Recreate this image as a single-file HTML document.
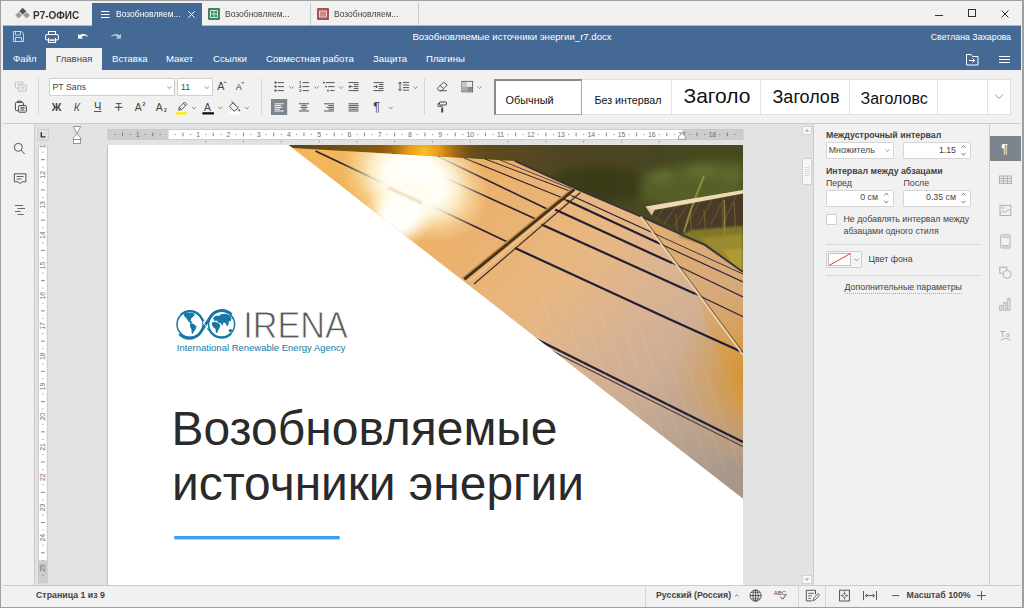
<!DOCTYPE html>
<html><head><meta charset="utf-8">
<style>
*{box-sizing:border-box;margin:0;padding:0}
html,body{width:1024px;height:608px;overflow:hidden;background:#f1f1f1;font-family:"Liberation Sans","DejaVu Sans",sans-serif;font-size:11px;color:#444}
.abs{position:absolute}
#win{position:absolute;left:0;top:0;width:1024px;height:608px;background:#f1f1f1;border:1px solid #9f9f9f;border-right-width:2px;border-bottom-width:1px}
#hdr{position:absolute;left:3px;top:26px;width:1018px;height:44px;background:#446995}
#tab1{position:absolute;left:92px;top:3px;width:110px;height:23px;background:#446995;color:#fff}
.ttab{position:absolute;top:3px;height:23px;border-right:1px solid #cbcbcb;color:#444}
.ttxt{position:absolute;top:5px;font-size:9.6px;line-height:12px;white-space:nowrap;transform:scaleX(.885);transform-origin:0 0}
.menu{position:absolute;top:48px;height:22px;line-height:22px;font-size:9.6px;color:#fff;white-space:nowrap}
#toolbar{position:absolute;left:3px;top:70px;width:1018px;height:54px;background:#f1f1f1;border-bottom:1px solid #cbcbcb}
#left{position:absolute;left:3px;top:124px;width:32px;height:461px;background:#f1f1f1;border-right:1px solid #cbcbcb}
#doc{position:absolute;left:35px;top:124px;width:778px;height:461px;background:#e2e2e2;overflow:hidden}
#page{position:absolute;left:73px;top:21px;width:635px;height:445px;background:#fff}
#rpanel{position:absolute;left:813px;top:124px;width:177px;height:461px;background:#f1f1f1;border-left:1px solid #cbcbcb;border-right:1px solid #cbcbcb}
#ricons{position:absolute;left:990px;top:124px;width:31px;height:461px;background:#f1f1f1}
#status{position:absolute;left:3px;top:585px;width:1018px;height:22px;background:#f1f1f1;border-top:1px solid #cbcbcb}
.gl{top:80px;width:1px;height:34px;background:#e3e3e3}
.gt{color:#111;line-height:14px;white-space:nowrap}
.pl{font-size:8.8px;line-height:12px;color:#444;white-space:nowrap}
.b{font-weight:bold}
.r{text-align:right}
.inp{background:#fff;border:1px solid #d6d6d6;border-radius:1px}
.vs{top:586px;width:1px;height:21px;background:#d4d4d4}
</style></head><body>
<div id="win"></div>
<!-- title tabs -->

<!-- title row -->
<svg class="abs" style="left:14.5px;top:8px" width="16" height="12" viewBox="0 0 16 12">
 <rect x="5.2" y="0.8" width="5" height="5" transform="rotate(45 7.7 3.3)" fill="#555"/>
 <rect x="1.3" y="5" width="4.6" height="4.6" transform="rotate(45 3.6 7.3)" fill="#999"/>
 <rect x="9.3" y="5" width="4.6" height="4.6" transform="rotate(45 11.6 7.3)" fill="#999"/>
</svg>
<div class="abs" style="left:33px;top:7.6px;font-size:11.3px;font-weight:bold;color:#333;white-space:nowrap;line-height:14px;transform:scaleX(.885);transform-origin:0 0">Р7-ОФИС</div>
<div id="tab1">
 <svg class="abs" style="left:9px;top:8px" width="9" height="7" viewBox="0 0 9 7"><path d="M0 .5h8.5M0 3.5h8.5M0 6.5h8.5" stroke="#fff" stroke-width="1"/></svg>
 <span class="ttxt" style="left:24px;color:#fff">Возобновляем...</span>
 <svg class="abs" style="left:96px;top:8px" width="7" height="7" viewBox="0 0 7 7"><path d="M.3 .3L6.7 6.7M6.7 .3L.3 6.7" stroke="#fff" stroke-width="1"/></svg>
</div>
<div class="ttab" style="left:202px;width:109px">
 <svg class="abs" style="left:6px;top:5px" width="12" height="12" viewBox="0 0 12 12"><rect x="0" y="0" width="12" height="12" rx="1" fill="#40865c"/><path d="M2.5 2.5h7v7h-7zM2.5 6h7M6 2.5v7" stroke="#cfe3d6" stroke-width="1" fill="none"/></svg>
 <span class="ttxt" style="left:23px">Возобновляем...</span>
</div>
<div class="ttab" style="left:311px;width:108px">
 <svg class="abs" style="left:6px;top:5px" width="12" height="12" viewBox="0 0 12 12"><rect x="0" y="0" width="12" height="12" rx="1" fill="#aa5252"/><rect x="2.5" y="3" width="7" height="6" fill="#c98a8a" stroke="#e8cdcd" stroke-width="1"/></svg>
 <span class="ttxt" style="left:23px">Возобновляем...</span>
</div>
<!-- window controls -->
<svg class="abs" style="left:930px;top:6px" width="90" height="16" viewBox="0 0 90 16">
 <path d="M5 9.5h8" stroke="#333" stroke-width="1"/>
 <rect x="38.5" y="3.5" width="7" height="7" fill="none" stroke="#333" stroke-width="1"/>
 <path d="M71.5 4.5l7 7M78.5 4.5l-7 7" stroke="#333" stroke-width="1"/>
</svg>

<div class="abs" style="left:3px;top:25px;width:89px;height:1px;background:#acbbcc"></div><div class="abs" style="left:202px;top:25px;width:819px;height:1px;background:#acbbcc"></div>
<div id="hdr">
 <!-- quick icons: coordinates relative to hdr (left 3, top 26) -->
 <svg class="abs" style="left:9px;top:4px" width="120" height="14" viewBox="0 0 120 14">
  <g fill="none" stroke="#c5d2e0" stroke-width="1">
   <path d="M1.5 1.5h8l2 2v8h-10z"/><path d="M3.5 1.5v3.5h5v-3.5M3.5 11.5v-4h6v4"/>
  </g>
  <g fill="none" stroke="#fff" stroke-width="1.1">
   <path d="M36.5 4.5v-3h7v3"/><rect x="33.6" y="4.5" width="12.8" height="5.5" rx="1.5"/><path d="M36.5 8v4.5h7v-4.5M38 10.3h4"/>
  </g>
  <path d="M66 8.5l0-4.8 1.6 1.6c3-2.2 6.8-1.6 9.2 2.2-2.6-2.2-5.2-2.6-7.4-.4l1.6 1.6z" fill="#fff"/>
  <path d="M109 8.5l0-4.8-1.6 1.6c-3-2.2-6.800-1.600-9.200 2.200 2.600-2.200 5.200-2.600 7.400-.4l-1.600 1.600z" fill="#b9c6d8"/>
 </svg>
 <div class="abs" style="left:0;top:5px;width:1018px;text-align:center;color:#fff;font-size:9.6px;line-height:12px;white-space:nowrap">Возобновляемые источники энергии_r7.docx</div>
 <div class="abs" style="right:10px;top:5px;color:#fff;font-size:8.8px;line-height:12px;white-space:nowrap">Светлана Захарова</div>
 <div class="abs" style="left:43px;top:22px;width:56px;height:22px;background:#f1f1f1"></div>
 <span class="menu" style="left:10px;top:22px">Файл</span>
 <span class="menu" style="left:53px;top:22px;color:#444">Главная</span>
 <span class="menu" style="left:109px;top:22px">Вставка</span>
 <span class="menu" style="left:163px;top:22px">Макет</span>
 <span class="menu" style="left:210px;top:22px">Ссылки</span>
 <span class="menu" style="left:263px;top:22px">Совместная работа</span>
 <span class="menu" style="left:370px;top:22px">Защита</span>
 <span class="menu" style="left:423px;top:22px">Плагины</span>
 <svg class="abs" style="left:962px;top:27px" width="50" height="14" viewBox="0 0 50 14">
  <g fill="none" stroke="#fff" stroke-width="1"><path d="M1.500 1.500h4.500l1.500 2h5.500v8.500h-11.500z"/><path d="M4 7.500h5.500M7.500 5.500l2 2-2 2"/></g>
  <path d="M34 3.500h11M34 6.500h11M34 9.500h11" stroke="#fff" stroke-width="1"/>
 </svg>
</div>


<div id="toolbar"></div>
<!-- combos -->
<div class="abs" style="left:49px;top:78px;width:126px;height:18px;background:#fff;border:1px solid #cfcfcf;border-radius:1px"></div>
<div class="abs" style="left:52.4px;top:81px;font-size:8.8px;line-height:12px;color:#444">PT Sans</div>
<div class="abs" style="left:177px;top:78px;width:36px;height:18px;background:#fff;border:1px solid #cfcfcf;border-radius:1px"></div>
<div class="abs" style="left:181px;top:81px;font-size:8.8px;line-height:12px;color:#444">11</div>
<svg class="abs" style="left:0;top:70px" width="1024" height="54" viewBox="0 70 1024 54" font-family="Liberation Sans, sans-serif">
<g stroke="#d4d4d4" stroke-width="1"><path d="M38.500 78.500v36M261.500 78.500v36M424.500 78.500v36"/></g>
<!-- copy (disabled) -->
<g fill="#f1f1f1" stroke="#c2c2c2" stroke-width="0.900"><rect x="15.400" y="81.900" width="7.600" height="6.200" rx="0.500"/><path d="M17 84h4.400" /><rect x="18.500" y="85.100" width="7.800" height="6.200" rx="0.500"/><path d="M20.300 87.300h4.200M20.300 89.200h4.200"/></g>
<!-- paste -->
<g fill="#f1f1f1" stroke="#444" stroke-width="1"><path d="M17.400 102.500v-1.300h4v1.300" fill="none"/><rect x="15.400" y="102.400" width="8" height="8.200" rx="0.900"/><rect x="18.600" y="105.600" width="7.700" height="6.600" rx="0.700"/><path d="M20.400 107.900h4.100M20.400 110h4.100" stroke-width="1.200"/></g>
<path d="M167.4 86.4l2 2.2 2-2.200" fill="none" stroke="#777" stroke-width="0.8"/><path d="M205 86.4l2 2.2 2-2.200" fill="none" stroke="#777" stroke-width="0.8"/><path d="M192 106.8l2 2.2 2-2.200" fill="none" stroke="#777" stroke-width="0.8"/><path d="M218.3 106.8l2 2.2 2-2.200" fill="none" stroke="#777" stroke-width="0.8"/><path d="M245 106.8l2 2.2 2-2.200" fill="none" stroke="#777" stroke-width="0.8"/><path d="M289.5 86.4l2 2.2 2-2.200" fill="none" stroke="#777" stroke-width="0.8"/><path d="M314.5 86.4l2 2.2 2-2.200" fill="none" stroke="#777" stroke-width="0.8"/><path d="M339 86.4l2 2.2 2-2.200" fill="none" stroke="#777" stroke-width="0.8"/><path d="M413.4 86.4l2 2.2 2-2.200" fill="none" stroke="#777" stroke-width="0.8"/><path d="M477.6 86.4l2 2.2 2-2.200" fill="none" stroke="#777" stroke-width="0.8"/><path d="M388.8 106.8l2 2.2 2-2.200" fill="none" stroke="#777" stroke-width="0.8"/>
<!-- A inc / dec -->
<text x="217.300" y="90.200" font-size="10.800" fill="#444">A</text><path d="M223.800 83.200l1.300-1.400 1.300 1.400" fill="none" stroke="#444" stroke-width="0.800"/>
<text x="235.800" y="90.200" font-size="9" fill="#444">A</text><path d="M241.400 82l1.300 1.400 1.300-1.400" fill="none" stroke="#444" stroke-width="0.800"/>
<!-- row2 text icons -->
<text x="51.800" y="110.700" font-size="10.600" font-weight="bold" fill="#444">Ж</text>
<text x="73.800" y="110.700" font-size="10.600" font-style="italic" fill="#555">К</text>
<text x="94" y="109.600" font-size="11.200" fill="#444" textLength="7.400" lengthAdjust="spacingAndGlyphs">Ч</text><path d="M94 111.500h7.400" stroke="#444" stroke-width="0.900"/>
<text x="115.400" y="110.700" font-size="10.200" fill="#444">Т</text><path d="M114.800 107.300h7.600" stroke="#444" stroke-width="1"/>
<text x="134.800" y="111" font-size="10.400" fill="#444">A</text><text x="142.500" y="105.700" font-size="5" font-weight="bold" fill="#444">2</text>
<text x="155.800" y="111" font-size="10.400" fill="#444">A</text><text x="164" y="111.600" font-size="4.800" font-weight="bold" fill="#444">2</text>
<!-- highlighter pen -->
<g fill="none" stroke="#444" stroke-width="0.900"><path d="M179.300 107.300l5.200-5.200 2.300 2.300-5.200 5.200-2.900.6z"/><path d="M183.300 103.300l2.300 2.300"/><path d="M179.300 107.300l2.300 2.300"/></g>
<rect x="176" y="112.200" width="11" height="2.300" fill="#ffef00"/>
<!-- font color -->
<text x="204" y="110.700" font-size="10.400" fill="#444">A</text>
<rect x="202.400" y="112.200" width="11.500" height="2.300" fill="#111"/>
<!-- bucket -->
<g fill="none" stroke="#444" stroke-width="0.900"><path d="M232.800 102.800l5.600 5.200-4.200 3.200-4.800-4.600z"/><path d="M231.500 101.300l4 3.800"/></g><circle cx="239.300" cy="110.300" r="0.900" fill="#444"/>
<rect x="229" y="112.200" width="11.200" height="2.300" fill="#fff"/>
<!-- bullets -->
<g fill="#444"><circle cx="275.500" cy="82.600" r="1.150"/><circle cx="275.500" cy="86.600" r="1.150"/><circle cx="275.500" cy="90.600" r="1.150"/></g>
<path d="M277.600 82.600h6.400M277.600 86.600h6.400M277.600 90.600h6.400" stroke="#444" stroke-width="0.900"/>
<!-- numbered -->
<g font-size="4.200" font-weight="bold" fill="#444"><text x="298.900" y="84.300">1</text><text x="298.900" y="88.200">2</text><text x="298.900" y="92.100">3</text></g>
<path d="M302.600 82.600h6.400M302.600 86.600h6.400M302.600 90.600h6.400" stroke="#444" stroke-width="0.900"/>
<!-- multilevel -->
<g fill="#444"><circle cx="323.900" cy="82.600" r="0.900"/><circle cx="326.100" cy="86.600" r="0.900"/><circle cx="328" cy="90.600" r="0.900"/></g>
<path d="M325.800 82.600h8.700M328.200 86.600h6.300M330.300 90.600h4.200" stroke="#444" stroke-width="0.900"/>
<!-- dec indent -->
<g stroke="#444" stroke-width="0.900" fill="none"><path d="M348.500 82.600h10M348.500 90.600h10M353.800 84.600h4.700M353.800 86.600h4.700M353.800 88.600h4.700M349 86.600h3.800M350.600 85l-1.600 1.600 1.600 1.600"/></g>
<!-- inc indent -->
<g stroke="#444" stroke-width="0.900" fill="none"><path d="M373.500 82.600h10M373.500 90.600h10M378.800 84.600h4.700M378.800 86.600h4.700M378.800 88.600h4.700M373.600 86.600h3.800M375.800 85l1.600 1.600-1.600 1.600"/></g>
<!-- line spacing -->
<g stroke="#444" stroke-width="0.900" fill="none"><path d="M400 82v8.600M398.300 83.700l1.700-1.700 1.700 1.700M398.300 88.900l1.700 1.700 1.700-1.700M403 82.400h6M403 85h6M403 87.600h6M403 90.200h6"/></g>
<!-- eraser -->
<g stroke="#444" stroke-width="0.900" fill="none" stroke-linejoin="round"><path d="M437.300 88.300l6.200-6 3.800 2.600-5.600 5.800h-2.900z"/><path d="M440 85.500l3.600 3M440 90.700h6.800"/></g>
<!-- color scheme -->
<rect x="461.900" y="81.400" width="10.700" height="10.400" fill="#fff" stroke="#555" stroke-width="0.900"/><rect x="462.400" y="81.900" width="4.800" height="4.700" fill="#c6c6c6"/><rect x="462.400" y="86.600" width="4.800" height="4.700" fill="#a9a9a9"/><rect x="467.200" y="86.600" width="4.900" height="4.700" fill="#8b8b8b"/><rect x="467.200" y="81.900" width="4.900" height="4.700" fill="#ececec"/>
<!-- align left active -->
<rect x="271" y="99" width="16.200" height="16" fill="#7d858c"/>
<path d="M274.500 103.800h9.300M274.500 105.600h6.500M274.500 107.400h8M274.500 109.200h5.500M274.500 111h9.300" stroke="#fff" stroke-width="0.900"/>
<!-- center -->
<path d="M299 103.800h10M301.500 105.600h5M300.300 107.400h7.400M301.500 109.200h5M299 111h10" stroke="#444" stroke-width="0.900"/>
<!-- right -->
<path d="M324 103.800h10M328.500 105.600h5.500M326.500 107.400h7.500M328.500 109.200h5.500M324 111h10" stroke="#444" stroke-width="0.900"/>
<!-- justify -->
<path d="M348.500 103.800h10M348.500 105.600h10M348.500 107.400h10M348.500 109.200h10M348.500 111h10" stroke="#444" stroke-width="0.900"/>
<!-- pilcrow -->
<text x="373.300" y="110.600" font-size="12.600" fill="#444">¶</text>
<!-- paint roller -->
<g stroke="#444" fill="none"><rect x="439.500" y="102" width="7" height="3" rx="0.600" stroke-width="1"/><path d="M439.500 103.500h-1.500v2.800h4.200v1.700" stroke-width="0.900"/><path d="M442.200 108v4.500" stroke-width="2"/></g>
</svg>
<!-- styles gallery -->
<div class="abs" style="left:494px;top:79px;width:517px;height:36px;background:#fff;border:1px solid #e0e0e0"></div>
<div class="abs" style="left:494px;top:79px;width:88px;height:36px;border:2px solid #8a8a8a;border-right-width:1px;border-bottom-width:1px;border-right-color:#aaa;border-bottom-color:#aaa"></div>
<div class="abs gl" style="left:671px"></div><div class="abs gl" style="left:760px"></div><div class="abs gl" style="left:849px"></div><div class="abs gl" style="left:937px"></div><div class="abs gl" style="left:987px"></div>
<div class="abs gt" style="left:505.500px;top:93px;font-size:10.900px">Обычный</div>
<div class="abs gt" style="left:594.500px;top:93px;font-size:10.700px;width:67.500px;overflow:hidden">Без интервал</div>
<div class="abs gt" style="left:683.500px;top:84px;font-size:21px;width:67.500px;overflow:hidden;line-height:24px">Заголо</div>
<div class="abs gt" style="left:772.500px;top:87px;font-size:18px;width:67px;overflow:hidden;line-height:21px">Заголов</div>
<div class="abs gt" style="left:860.500px;top:89px;font-size:16px;width:67.500px;overflow:hidden;line-height:19px">Заголовс</div>
<svg class="abs" style="left:994px;top:93px" width="10" height="7" viewBox="0 0 10 7"><path d="M1 1.500l4 4 4-4" fill="none" stroke="#999" stroke-width="1"/></svg>


<div id="left"></div>
<svg class="abs" style="left:3px;top:124px" width="32" height="120" viewBox="3 124 32 120">
 <g fill="none" stroke="#555" stroke-width="1">
  <circle cx="18.300" cy="147.300" r="4"/><path d="M21.200 150.300l3.500 3.800"/>
  <path d="M14.300 173.800h11.600v8h-4l-1.800 2-1.800-2h-4z"/><path d="M16.600 176.500h7M16.600 179h5" stroke-width="0.900"/>
  <path d="M15 205.500h8M17.500 208.500h7.500M15 211.500h5.500M17.500 214.500h6" stroke-width="0.900"/>
 </g>
</svg>

<div id="doc"></div>
<!--DOC-START-->
<div class="abs" style="left:107px;top:145px;width:636px;height:440px;background:#fff;border-left:1px solid #bbbfc4"></div>
<svg class="abs" style="left:108px;top:145px" width="635" height="440" viewBox="108 145 635 440" font-family="Liberation Sans, sans-serif">
<defs>
<clipPath id="bgc"><path d="M288 145H743V272L704.800 244.900 640.700 216.500 574 188 514.800 161 293 148z"/></clipPath>
<clipPath id="pc"><path d="M280 147.300L293 148 514.800 161 574 188 640.700 216.500 704.800 244.900 743 272V500H280z"/></clipPath>
<clipPath id="tri"><path d="M288.5 145H743V498.5z"/></clipPath>
<linearGradient id="pg" gradientUnits="userSpaceOnUse" x1="330" y1="150" x2="743" y2="470">
 <stop offset="0" stop-color="#f3b65a"/><stop offset="0.25" stop-color="#ecb068"/><stop offset="0.5" stop-color="#e7b782"/><stop offset="0.75" stop-color="#d9b394"/><stop offset="1" stop-color="#b59a84"/>
</linearGradient>
<linearGradient id="bg" gradientUnits="userSpaceOnUse" x1="300" y1="150" x2="743" y2="175">
 <stop offset="0" stop-color="#5e4514"/><stop offset="0.27" stop-color="#9a6410"/><stop offset="0.42" stop-color="#5c4a1c"/><stop offset="0.6" stop-color="#4f4524"/><stop offset="0.8" stop-color="#484622"/><stop offset="1" stop-color="#464a1e"/>
</linearGradient>
<radialGradient id="sun" gradientUnits="userSpaceOnUse" cx="0" cy="0" r="68">
 <stop offset="0" stop-color="#fff"/><stop offset="0.4" stop-color="#fffef6"/><stop offset="0.58" stop-color="#fffae0" stop-opacity="0.82"/><stop offset="0.8" stop-color="#fff3c4" stop-opacity="0.35"/><stop offset="1" stop-color="#ffefb8" stop-opacity="0"/>
</radialGradient>
<radialGradient id="sun2" gradientUnits="userSpaceOnUse" cx="0" cy="0" r="40">
 <stop offset="0" stop-color="#fff"/><stop offset="0.42" stop-color="#fffef8"/><stop offset="0.6" stop-color="#fffdf0" stop-opacity="0.75"/><stop offset="0.8" stop-color="#fffae0" stop-opacity="0.3"/><stop offset="1" stop-color="#fffae0" stop-opacity="0"/>
</radialGradient>
<filter id="bl" x="-20%" y="-20%" width="140%" height="140%"><feGaussianBlur stdDeviation="4"/></filter>
<filter id="bl2" x="-20%" y="-20%" width="140%" height="140%"><feGaussianBlur stdDeviation="1.2"/></filter>
<radialGradient id="sun3" gradientUnits="userSpaceOnUse" cx="424" cy="153" r="46">
 <stop offset="0" stop-color="#ffc02a"/><stop offset="0.35" stop-color="#f0a018" stop-opacity="0.9"/><stop offset="0.7" stop-color="#c07c10" stop-opacity="0.5"/><stop offset="1" stop-color="#a8690f" stop-opacity="0"/>
</radialGradient>
<linearGradient id="sec3" gradientUnits="userSpaceOnUse" x1="642" y1="218" x2="743" y2="420">
 <stop offset="0" stop-color="#e0a65c"/><stop offset="0.5" stop-color="#dba462"/><stop offset="1" stop-color="#d99a44"/>
</linearGradient>
<linearGradient id="desat" gradientUnits="userSpaceOnUse" x1="560" y1="290" x2="700" y2="500">
 <stop offset="0" stop-color="#d2b29a" stop-opacity="0"/><stop offset="0.35" stop-color="#ceae96" stop-opacity="0.55"/><stop offset="0.7" stop-color="#bca490" stop-opacity="0.85"/><stop offset="1" stop-color="#a8968a" stop-opacity="1"/>
</linearGradient>
<radialGradient id="gold" gradientUnits="userSpaceOnUse" cx="765" cy="375" r="95">
 <stop offset="0" stop-color="#d08a22"/><stop offset="0.4" stop-color="#d8993c" stop-opacity="0.75"/><stop offset="1" stop-color="#dba462" stop-opacity="0"/>
</radialGradient>
</defs>
<g clip-path="url(#tri)">
 <rect x="288" y="145" width="456" height="354" fill="url(#pg)"/>
 <rect x="288" y="145" width="456" height="354" fill="url(#desat)"/>
 <!-- third section (right of rail 2) slightly more orange -->
 <path d="M640.700 216.500L704.800 244.900 743 272V420L695 290z" fill="url(#sec3)" opacity="0.550"/>
 <circle cx="765" cy="375" r="95" fill="url(#gold)"/>
 <!-- background hills -->
 <path d="M288 145H743V272L704.800 244.900 640.700 216.500 574 188 514.800 161 293 148z" fill="url(#bg)"/>
 <circle cx="424" cy="153" r="46" fill="url(#sun3)" clip-path="url(#bgc)"/>
 <!-- bushes -->
 <g clip-path="url(#bgc)">
 <g filter="url(#bl)">
 <ellipse cx="600" cy="184" rx="50" ry="18" fill="#383c16" opacity="0.900"/>
 <path d="M640 178c10-8 22-8 34-11s26-7 40-6l29 2v34l-60 12-40-8z" fill="#566228" opacity="0.900"/>
 <ellipse cx="662" cy="176" rx="12" ry="5" fill="#6f7a38" opacity="0.700"/><ellipse cx="702" cy="172" rx="16" ry="5" fill="#6c7836" opacity="0.700"/><ellipse cx="732" cy="176" rx="12" ry="6" fill="#667232" opacity="0.700"/>
 </g>
 </g>
 <!-- right array -->
 <path d="M650 212l93-18v44l-62-6z" fill="#4a3a28"/>
 <g stroke="#7a6850" stroke-width="0.800" opacity="0.750" fill="none"><path d="M664 208l-8 12M676 206l-12 18M688 204l-14 22M700 202l-14 24M712 200l-14 26M724 198l-14 28M736 196l-14 30"/></g>
 <g filter="url(#bl2)"><path d="M678 236l14-6 51-4v46l-38-27z" fill="#82782a"/>
 <path d="M700 238l43-4v38l-30-22z" fill="#9a8a2e"/><path d="M724 250l19-2v24l-12-9z" fill="#b09a34"/></g>
 <path d="M676 214l1 16M690 214l2 20M704 210l2 26M722 204l2 34M734 202l2 30" stroke="#75702e" stroke-width="1.200" fill="none" opacity="0.700"/>
 <path d="M704 176c-5 12-14 34-20 56" stroke="#8f9440" stroke-width="2" fill="none" opacity="0.900"/><path d="M724 200c1 10 1 24 0 46" stroke="#8c9040" stroke-width="1.600" fill="none" opacity="0.800"/>
 <path d="M645.600 206.600L743 190v3.400l-94 17.600z" fill="#f0d8b4"/>
 <path d="M645.600 206.600l6 9 3-5z" fill="#dcc09a"/>
 <!-- panel top edge dark -->
 <path d="M514.800 161L574 188 640.700 216.500 704.800 244.900 743 272" fill="none" stroke="#3a3040" stroke-width="1.800"/>
 <!-- panel lines left section -->
 <g stroke="#2b2233" stroke-width="1.600" fill="none">
  <path d="M315.500 151L508.600 242.500"/>
  <path d="M393 154L536.700 219.500"/>
  <path d="M438 156.500L548.700 209.700"/>
  <path d="M464 158L562.900 198.100" stroke-width="1.100"/>
  <path d="M485 159L571 191.500" stroke-width="1"/>
  <path d="M500 160L573 189.500" stroke-width="0.800"/>
 </g>
 <!-- right section lines -->
 <g stroke="#221e34" stroke-width="2.200" fill="none">
  <path d="M563.700 199L660 243.700"/>
  <path d="M555 209.600L672 263"/>
  <path d="M541.500 224.400L695.500 294"/>
  <path d="M515 248L669 319 743 352.500"/>
  <path d="M568 194L651 232" stroke-width="1.200"/>
 </g>
 <g stroke="#2e2840" stroke-width="1.200" fill="none">
  <path d="M660 243.700L743 282"/><path d="M672 263L743 297"/><path d="M695.500 294L743 316.700"/>
  <path d="M651 232L743 274" stroke-width="0.900"/>
 </g>
 <!-- lower double line -->
 <path d="M530 336L743 442" stroke="#221e34" stroke-width="2.200" fill="none"/>
 <path d="M538 344L743 446.500" stroke="#3a3448" stroke-width="1.100" fill="none"/>
 <!-- rail 1 -->
 <path d="M574 189L464 279" stroke="#4a3218" stroke-width="4" fill="none"/>
 <path d="M573 187.800L462.500 278" stroke="#c8964e" stroke-width="1.400" fill="none"/>
 <path d="M577 190.500L470 281" stroke="#f3dcb8" stroke-width="1" fill="none" opacity="0.8"/>
 <path d="M580.500 192.500L474 284" stroke="#3a2c28" stroke-width="1.200" fill="none"/>
 <!-- rail 2 -->
 <path d="M640.700 216.500L695 290 743 355" stroke="#ecd0a8" stroke-width="1.700" fill="none"/>
 <path d="M642.500 216.500L697 290 743 352" stroke="#5a4636" stroke-width="0.800" fill="none"/>
 <!-- faint cell lines -->
 <g stroke="#fff" stroke-width="0.600" opacity="0.180" fill="none">
  <path d="M560 300l40 110M580 305l44 120M600 312l46 124M620 320l48 128M640 330l48 128M660 338l48 130M680 348l46 126M700 358l40 110M540 292l36 100M520 284l30 86"/>
 </g>
 <!-- sun glows -->
 <g clip-path="url(#pc)"><g transform="translate(415 180) rotate(28) scale(1.150 0.850)"><circle r="68" fill="url(#sun)"/></g>
 <g transform="translate(401 212) rotate(-50) scale(1.100 0.850)"><circle r="40" fill="url(#sun2)"/></g>
 <path d="M388 187.500L422 203" stroke="#d08a30" stroke-width="1.500" opacity="0.500" fill="none" filter="url(#bl2)"/></g>
</g>

<g fill="none" stroke="#1578a5">
 <circle cx="190" cy="324.300" r="13" stroke-width="1.500"/>
 <circle cx="221.600" cy="324.300" r="13" stroke-width="1.500"/>
 <path d="M179.500 333.800A13.400 13.400 0 0 0 200 333.200L211.600 315.200A13.400 13.400 0 0 1 231.500 314.500" stroke-width="2.800"/>
 <path d="M181 314.600A13 13 0 0 1 199.500 315.200L203.500 321" stroke-width="2.200"/>
 <path d="M207.800 327.800L212 333.600A13 13 0 0 0 231 333.400" stroke-width="2.200"/>
</g>
<path d="M202.600 322.200l5.600 6.200" stroke="#fff" stroke-width="0.900" fill="none"/>
<g fill="#1578a5">
 <path d="M183.500 313.500L187 312.500 192 312.800 195 314 193.500 316.500 191.500 318 190.500 320.500 192.500 322.500 191 323.500 188.500 321.500 186.500 318.500 184.500 316.500z"/>
 <path d="M190 323.200L193.500 323.800 196.500 326.500 195.500 329.500 193.500 332 192.800 334 191.800 333.500 191.500 329.500 190 326.500z"/>
 <path d="M213 318L216 315.500 219 316 221 314.200 226 313.800 230 315.500 231.500 318.500 230.500 321.500 229 321 228.500 324.500 227 326.500 225.500 323 223.500 322.500 222.500 326 221 323.500 218.500 322.500 216.500 320.500 214.500 321z"/>
 <path d="M212 322.500L215 321.800 218.500 323 220.500 325.500 219.500 328 218 330.500 217.300 333 216 332.500 215.500 329 213.500 327.500 211.800 325z"/>
 <path d="M228.500 330L231 328.800 232.300 330.200 231 332 229 332z"/>
</g>
<text x="243.300" y="337.500" font-size="36.500" fill="#58585a" stroke="#fff" stroke-width="0.800" textLength="104.500" lengthAdjust="spacingAndGlyphs">IRENA</text>
<text x="176.800" y="351.200" font-size="9.100" fill="#1578a5" textLength="168.800" lengthAdjust="spacingAndGlyphs">International Renewable Energy Agency</text>
<text x="171.500" y="444.600" font-size="47.800" fill="#2a2a2a" textLength="386" lengthAdjust="spacingAndGlyphs">Возобновляемые</text>
<text x="172" y="499.700" font-size="47.800" fill="#2a2a2a" textLength="412" lengthAdjust="spacingAndGlyphs">источники энергии</text>
<rect x="174.200" y="536" width="165.500" height="3.400" fill="#3e9ff0"/>
</svg>
<svg class="abs" style="left:0;top:124px" width="813" height="22" viewBox="0 124 813 22" font-family="Liberation Sans, sans-serif">
<rect x="108" y="129.5" width="635" height="10.0" fill="#fff"/>
<rect x="108" y="129.5" width="60.6" height="10.0" fill="#cdcdcd"/>
<rect x="682" y="129.5" width="61" height="10.0" fill="#cdcdcd"/>
<rect x="108" y="129.5" width="635" height="10.0" fill="none" stroke="#c4c4c4" stroke-width="0.8"/>
<path d="M114.98 134v1M122.54 132.6v3.8M130.1 134v1M145.22 134v1M152.78 132.6v3.8M160.34 134v1M175.46 134v1M183.02 132.6v3.8M190.58 134v1M205.7 134v1M213.26 132.6v3.8M220.82 134v1M235.94 134v1M243.5 132.6v3.8M251.06 134v1M266.18 134v1M273.74 132.6v3.8M281.3 134v1M296.42 134v1M303.98 132.6v3.8M311.54 134v1M326.66 134v1M334.22 132.6v3.8M341.78 134v1M356.9 134v1M364.46 132.6v3.8M372.02 134v1M387.14 134v1M394.7 132.6v3.8M402.26 134v1M417.38 134v1M424.94 132.6v3.8M432.5 134v1M447.62 134v1M455.18 132.6v3.8M462.74 134v1M477.86 134v1M485.42 132.6v3.8M492.98 134v1M508.1 134v1M515.66 132.6v3.8M523.22 134v1M538.34 134v1M545.9 132.6v3.8M553.46 134v1M568.58 134v1M576.14 132.6v3.8M583.7 134v1M598.82 134v1M606.38 132.6v3.8M613.94 134v1M629.06 134v1M636.62 132.6v3.8M644.18 134v1M659.3 134v1M666.86 132.6v3.8M674.42 134v1M689.54 134v1M697.1 132.6v3.8M704.66 134v1M719.78 134v1M727.34 132.6v3.8M734.9 134v1" stroke="#666" stroke-width="0.8" fill="none"/>
<g font-size="6.900" fill="#6e6e6e"><text x="137.66" y="137.2" text-anchor="middle">1</text><text x="198.14" y="137.2" text-anchor="middle">1</text><text x="228.38" y="137.2" text-anchor="middle">2</text><text x="258.62" y="137.2" text-anchor="middle">3</text><text x="288.86" y="137.2" text-anchor="middle">4</text><text x="319.1" y="137.2" text-anchor="middle">5</text><text x="349.34" y="137.2" text-anchor="middle">6</text><text x="379.58" y="137.2" text-anchor="middle">7</text><text x="409.82" y="137.2" text-anchor="middle">8</text><text x="440.06" y="137.2" text-anchor="middle">9</text><text x="470.3" y="137.2" text-anchor="middle">10</text><text x="500.54" y="137.2" text-anchor="middle">11</text><text x="530.78" y="137.2" text-anchor="middle">12</text><text x="561.02" y="137.2" text-anchor="middle">13</text><text x="591.26" y="137.2" text-anchor="middle">14</text><text x="621.5" y="137.2" text-anchor="middle">15</text><text x="651.74" y="137.2" text-anchor="middle">16</text><text x="681.98" y="137.2" text-anchor="middle">17</text><text x="712.22" y="137.2" text-anchor="middle">18</text></g>
<path d="M205.7 140.5v2.2M243.5 140.5v2.2M281.3 140.5v2.2M319.1 140.5v2.2M356.9 140.5v2.2M394.7 140.5v2.2M432.5 140.5v2.2M470.3 140.5v2.2M508.1 140.5v2.2M545.9 140.5v2.2M583.7 140.5v2.2M621.5 140.5v2.2M659.3 140.5v2.2" stroke="#9a9a9a" stroke-width="0.8" fill="none"/>
<rect x="37.9" y="129.4" width="10.6" height="10.6" fill="#e2e2e2" stroke="#c6c6c6" stroke-width="0.8"/><path d="M41.3 132.3v4.6h4.2" fill="none" stroke="#333" stroke-width="1.4"/>
<g fill="#fff" stroke="#808080" stroke-width="0.8"><path d="M73.400 126.500h7.200l-3.600 7z"/><path d="M73.400 139.500v-1.800l3.600-4 3.600 4v1.800z"/><rect x="73.400" y="139.500" width="7.200" height="3.900"/></g>
<path d="M678.6 139.4v-2.6l3.400-4 3.400 4v2.600z" fill="#fff" stroke="#8a8a8a" stroke-width="0.8"/>
</svg>
<svg class="abs" style="left:35px;top:145px" width="16" height="440" viewBox="35 145 16 440" font-family="Liberation Sans, sans-serif">
<rect x="38.4" y="145" width="8.8" height="438" fill="#fff"/>
<rect x="38.4" y="560.3" width="8.8" height="22.7" fill="#cdcdcd"/>
<rect x="38.4" y="145" width="8.8" height="438" fill="none" stroke="#c4c4c4" stroke-width="0.8"/>
<path d="M42.4 152.12h1M41 159.68h3.8M42.4 167.24h1M42.4 182.36h1M41 189.92h3.8M42.4 197.48h1M42.4 212.6h1M41 220.16h3.8M42.4 227.72h1M42.4 242.84h1M41 250.4h3.8M42.4 257.96h1M42.4 273.08h1M41 280.64h3.8M42.4 288.2h1M42.4 303.32h1M41 310.88h3.8M42.4 318.44h1M42.4 333.56h1M41 341.12h3.8M42.4 348.68h1M42.4 363.8h1M41 371.36h3.8M42.4 378.92h1M42.4 394.04h1M41 401.6h3.8M42.4 409.16h1M42.4 424.28h1M41 431.84h3.8M42.4 439.4h1M42.4 454.52h1M41 462.08h3.8M42.4 469.64h1M42.4 484.76h1M41 492.32h3.8M42.4 499.88h1M42.4 515h1M41 522.56h3.8M42.4 530.12h1M42.4 545.24h1M41 552.8h3.8M42.4 560.36h1M42.4 575.48h1" stroke="#666" stroke-width="0.8" fill="none"/>
<g font-size="6.900" fill="#6e6e6e"><text transform="translate(45.4 144.56) rotate(-90)" text-anchor="middle">11</text><text transform="translate(45.4 174.8) rotate(-90)" text-anchor="middle">12</text><text transform="translate(45.4 205.04) rotate(-90)" text-anchor="middle">13</text><text transform="translate(45.4 235.28) rotate(-90)" text-anchor="middle">14</text><text transform="translate(45.4 265.52) rotate(-90)" text-anchor="middle">15</text><text transform="translate(45.4 295.76) rotate(-90)" text-anchor="middle">16</text><text transform="translate(45.4 326) rotate(-90)" text-anchor="middle">17</text><text transform="translate(45.4 356.24) rotate(-90)" text-anchor="middle">18</text><text transform="translate(45.4 386.48) rotate(-90)" text-anchor="middle">19</text><text transform="translate(45.4 416.72) rotate(-90)" text-anchor="middle">20</text><text transform="translate(45.4 446.96) rotate(-90)" text-anchor="middle">21</text><text transform="translate(45.4 477.2) rotate(-90)" text-anchor="middle">22</text><text transform="translate(45.4 507.44) rotate(-90)" text-anchor="middle">23</text><text transform="translate(45.4 537.68) rotate(-90)" text-anchor="middle">24</text><text transform="translate(45.4 567.92) rotate(-90)" text-anchor="middle">25</text></g>
</svg>
<!--DOC-END-->

<div id="rpanel"></div>
<!-- doc scrollbar -->
<div class="abs" style="left:802px;top:126px;width:10px;height:9px;background:#f7f7f7;border:1px solid #d4d4d4"></div>
<div class="abs" style="left:802px;top:575px;width:10px;height:9px;background:#f7f7f7;border:1px solid #d4d4d4"></div>
<div class="abs" style="left:802px;top:158px;width:10px;height:27px;background:#f7f7f7;border:1px solid #d0d0d0;border-radius:1px"></div>
<svg class="abs" style="left:800px;top:124px" width="14" height="461" viewBox="800 124 14 461"><path d="M804.800 131.500l2.200-2.600 2.200 2.600z" fill="#aaa"/><path d="M804.800 578.500l2.200 2.600 2.200-2.600z" fill="#aaa"/><path d="M804.600 167.500h4.800M804.600 169.500h4.800M804.600 171.500h4.800M804.600 173.500h4.800M804.600 175.500h4.800" stroke="#cfcfcf" stroke-width="0.800"/></svg>
<!-- right panel content -->
<div class="abs pl b" style="left:826px;top:128.9px">Междустрочный интервал</div>
<div class="abs inp" style="left:826px;top:142px;width:68px;height:17px"></div>
<div class="abs pl" style="left:828.8px;top:143.9px">Множитель</div>
<div class="abs inp" style="left:903px;top:142px;width:68px;height:17px"></div>
<div class="abs pl r" style="left:903px;top:143.9px;width:53px">1.15</div>
<div class="abs pl b" style="left:826px;top:164.9px">Интервал между абзацами</div>
<div class="abs pl" style="left:826px;top:176.9px">Перед</div>
<div class="abs pl" style="left:903.500px;top:176.9px">После</div>
<div class="abs inp" style="left:826px;top:189.500px;width:68px;height:17px"></div>
<div class="abs pl r" style="left:826px;top:191.4px;width:52px">0 см</div>
<div class="abs inp" style="left:903px;top:189.500px;width:68px;height:17px"></div>
<div class="abs pl r" style="left:903px;top:191.4px;width:53px">0.35 см</div>
<div class="abs" style="left:826px;top:214px;width:11px;height:11px;background:#fff;border:1px solid #cfcfcf;border-radius:1px"></div>
<div class="abs pl" style="left:843.500px;top:212.9px">Не добавлять интервал между</div>
<div class="abs pl" style="left:843.500px;top:224.9px">абзацами одного стиля</div>
<div class="abs" style="left:826px;top:244px;width:155px;height:1px;background:#d8d8d8"></div>
<div class="abs" style="left:826px;top:251px;width:36px;height:17px;border:1px solid #cfcfcf;background:#f5f5f5;border-radius:1px"></div>
<div class="abs" style="left:828px;top:253px;width:23px;height:13px;background:#fff;border:1px solid #c0c0c0"></div>
<div class="abs pl" style="left:868.500px;top:252.9px">Цвет фона</div>
<div class="abs" style="left:826px;top:275px;width:155px;height:1px;background:#d8d8d8"></div>
<div class="abs pl" style="left:844.500px;top:281.9px;border-bottom:1px dotted #aaa;line-height:11px;padding-bottom:0px">Дополнительные параметры</div>
<svg class="abs" style="left:813px;top:124px" width="177" height="200" viewBox="813 124 177 200">
 <path d="M885.500 149.400l2 2.200 2-2.200" fill="none" stroke="#888" stroke-width="0.800"/>
 <path d="M961.5 147.70000000000002l2-2.200 2 2.200M961.5 153.10000000000002l2 2.200 2-2.200" fill="none" stroke="#555" stroke-width="0.800"/><path d="M884.3 195.4l2-2.200 2 2.200M884.3 200.8l2 2.200 2-2.200" fill="none" stroke="#555" stroke-width="0.800"/><path d="M961.5 195.4l2-2.200 2 2.200M961.5 200.8l2 2.200 2-2.200" fill="none" stroke="#555" stroke-width="0.800"/>
 <path d="M829 265.500l21.500-12" stroke="#e0393a" stroke-width="1"/>
 <path d="M854.800 258.800l1.800 2 1.800-2" fill="none" stroke="#777" stroke-width="0.800"/>
</svg>
<div id="ricons"></div>
<div class="abs" style="left:990px;top:136px;width:31px;height:25px;background:#7d858c"></div>
<svg class="abs" style="left:990px;top:124px" width="31" height="240" viewBox="990 124 31 240" font-family="Liberation Sans, sans-serif">
 <text x="1001.200" y="152.600" font-size="12.400" fill="#fff">¶</text>
 <g fill="none" stroke="#a9a9a9" stroke-width="0.900">
  <rect x="999.400" y="176" width="12" height="7.400"/><path d="M999.400 178.500h12M999.400 181h12M1003.400 176v7.400M1007.400 176v7.400"/>
  <rect x="1000" y="205.300" width="10.800" height="10.200"/><path d="M1000.500 213.500l2.800-2.600 2.200 1.600 2.600-3 2.400 2.200"/><circle cx="1002.800" cy="207.800" r="0.700"/>
  <rect x="1000.700" y="234.800" width="9.400" height="13.200" rx="0.800"/><path d="M1002 237h6.800M1002 245.800h6.800" stroke-width="1.200"/>
  <rect x="999.800" y="267.200" width="7" height="6"/><circle cx="1007.200" cy="274.300" r="4" fill="#f1f1f1"/>
  <rect x="999.800" y="305.600" width="2.200" height="4.600"/><rect x="1003.800" y="302.600" width="2.200" height="7.600"/><rect x="1007.800" y="298.600" width="2.200" height="11.600"/>
  <path d="M1000.800 340.600c2.800-2.800 7-2.800 9.800 0"/>
 </g>
 <text x="999.800" y="337" font-size="9.500" fill="#a9a9a9">Т</text><text x="1005.800" y="337" font-size="7" fill="#a9a9a9">а</text>
</svg>


<div id="status"></div>
<div class="abs pl b" style="left:36px;top:589.4px">Страница 1 из 9</div>
<div class="abs vs" style="left:645px"></div><div class="abs vs" style="left:798px"></div><div class="abs vs" style="left:825px"></div>
<div class="abs pl b" style="left:656px;top:589.4px">Русский (Россия)</div>
<div class="abs pl b" style="left:906.5px;top:589.4px">Масштаб 100%</div>
<svg class="abs" style="left:640px;top:586px" width="380" height="21" viewBox="640 586 380 21" font-family="Liberation Sans, sans-serif">
 <path d="M734.800 596.600l1.800-2 1.800 2" fill="none" stroke="#666" stroke-width="0.800"/>
 <g fill="none" stroke="#444" stroke-width="0.900">
  <circle cx="755.600" cy="595.600" r="5.600"/><ellipse cx="755.600" cy="595.600" rx="2.700" ry="5.600"/><path d="M750 595.600h11.200M755.600 590v11.200"/><path d="M751.200 592.400h8.800M751.200 598.800h8.800" stroke-width="0.600"/>
  <path d="M780.400 596.800l2.200 2.400 3.800-4.600" stroke-width="1"/>
  <path d="M806.300 590.300h9.200v4M806.300 590.300v10.600h6"/><path d="M808.300 593.300h5.500M808.300 595.800h3.500M808.300 598.300h2.500" stroke-width="0.800"/><path d="M813 600.500l.6-2.200 4.400-4.600 1.600 1.600-4.400 4.600z" stroke-width="0.800"/>
  <rect x="839.600" y="590.200" width="9.800" height="10.800"/><path d="M844.500 591.400v2.800M844.500 599.800v-2.800M840.800 595.600h2.600M848.200 595.600h-2.600M843.400 593.200l1.100 1.100 1.100-1.100M843.400 598l1.100-1.100 1.100 1.100M842.300 594.500l1.100 1.100-1.100 1.100M846.700 594.500l-1.100 1.100 1.100 1.100" stroke-width="0.700"/>
  <path d="M863.500 591v9.200M876.500 591v9.200M865.500 595.600h9M867.300 593.800l-1.800 1.800 1.800 1.800M872.700 593.800l1.800 1.800-1.800 1.800"/>
  <path d="M892.200 595.600h7"/><path d="M977 595.600h9M981.500 591.100v9"/>
 </g>
 <text x="773.800" y="595.200" font-size="5.800" fill="#444" textLength="12.400" lengthAdjust="spacingAndGlyphs">ABC</text>
</svg>

</body></html>
